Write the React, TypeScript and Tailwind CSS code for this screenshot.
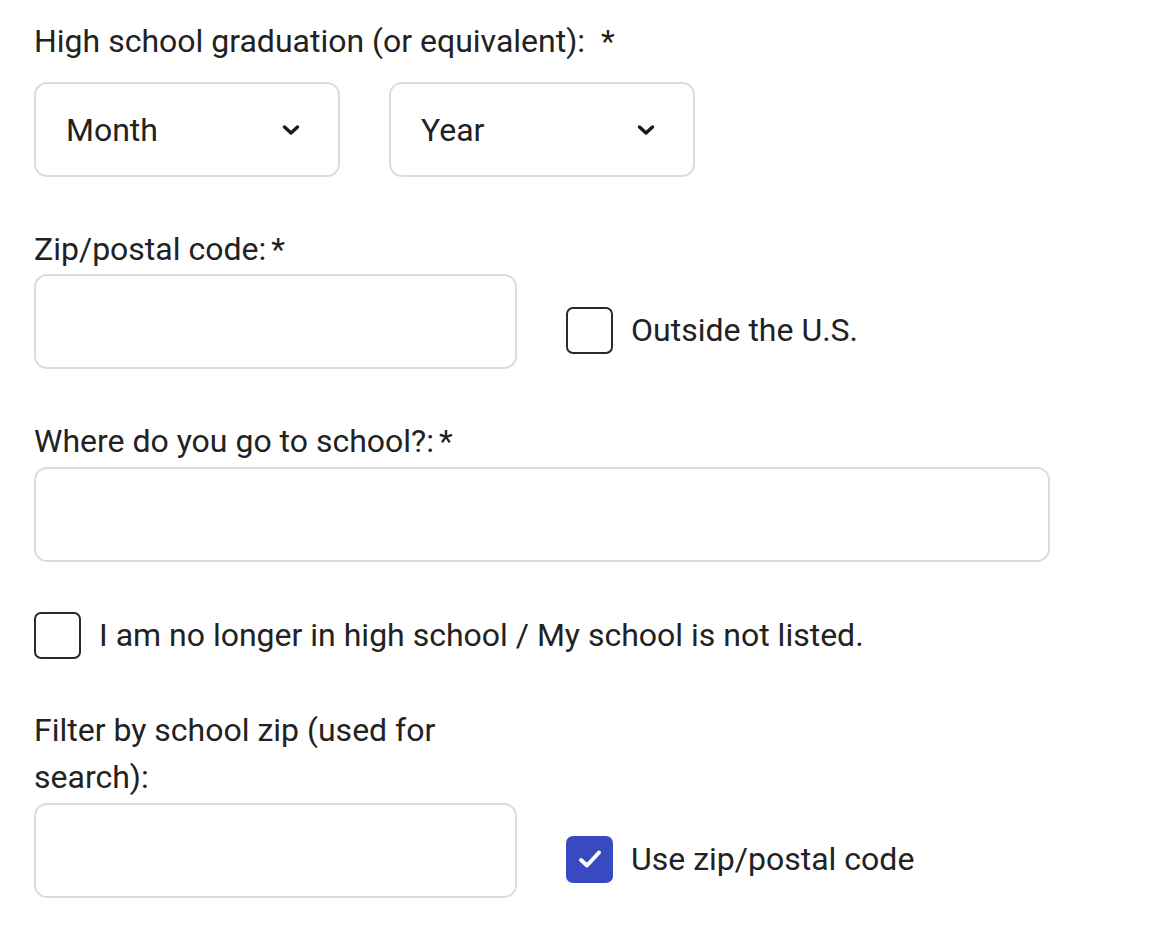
import React, { useState } from 'react';

const Chevron: React.FC = () => (
  <svg width="18" height="12" viewBox="0 0 18 12" fill="none" className="shrink-0">
    <path d="M2.5 3 L9 9 L15.5 3" stroke="#1a1a1a" strokeWidth="3.4" strokeLinecap="round" strokeLinejoin="round" />
  </svg>
);

const Select: React.FC<{ placeholder: string }> = ({ placeholder }) => (
  <div className="w-[306px] h-[95px] border-2 border-[#dcdcdc] rounded-[13px] flex items-center justify-between pl-[30px] pr-[38px] bg-white">
    <span className="text-[32px] text-[#222] leading-none">{placeholder}</span>
    <Chevron />
  </div>
);

const Checkbox: React.FC<{ checked?: boolean; onToggle: () => void }> = ({ checked, onToggle }) => (
  <button
    type="button"
    onClick={onToggle}
    className={
      checked
        ? 'w-[47px] h-[47px] rounded-[7px] bg-[#3949bf] flex items-center justify-center shrink-0'
        : 'w-[47px] h-[47px] rounded-[7px] border-2 border-[#2a2a2a] bg-white shrink-0'
    }
  >
    {checked && (
      <svg width="26" height="22" viewBox="0 0 26 22" fill="none">
        <path d="M4 12 L10 17.5 L22 4.5" stroke="white" strokeWidth="4" strokeLinecap="round" strokeLinejoin="round" />
      </svg>
    )}
  </button>
);

const App: React.FC = () => {
  const [outside, setOutside] = useState(false);
  const [notListed, setNotListed] = useState(false);
  const [useZip, setUseZip] = useState(true);

  return (
    <div
      className="min-h-[932px] bg-white pl-[34px] pt-[17px] text-[#222] text-[32px] leading-[48px]"
      style={{ fontFamily: 'Roboto, "Liberation Sans", sans-serif' }}
    >
      {/* Graduation */}
      <div className="mb-[17px]">High school graduation (or equivalent):&nbsp; *</div>
      <div className="flex gap-[49px]">
        <Select placeholder="Month" />
        <Select placeholder="Year" />
      </div>

      {/* Zip */}
      <div className="mt-[48px]">Zip/postal code:<span className="ml-[5px]">*</span></div>
      <div className="flex items-start mt-px">
        <input className="w-[483px] h-[95px] border-2 border-[#dcdcdc] rounded-[13px] outline-none px-4" />
        <label className="flex items-center gap-[18px] ml-[49px] mt-[32px]">
          <Checkbox checked={outside} onToggle={() => setOutside(v => !v)} />
          <span>Outside the U.S.</span>
        </label>
      </div>

      {/* School */}
      <div className="mt-[48px]">Where do you go to school?:<span className="ml-[5px]">*</span></div>
      <input className="w-[1016px] h-[95px] border-2 border-[#dcdcdc] rounded-[13px] outline-none px-4 mt-[2px] block" />

      <label className="flex items-center gap-[18px] mt-[49px]">
        <Checkbox checked={notListed} onToggle={() => setNotListed(v => !v)} />
        <span>I am no longer in high school / My school is not listed.</span>
      </label>

      {/* Filter */}
      <div className="mt-[48px] w-[483px] leading-[47px]">Filter by school zip (used for search):</div>
      <div className="flex items-start mt-[2px]">
        <input className="w-[483px] h-[95px] border-2 border-[#dcdcdc] rounded-[13px] outline-none px-4" />
        <label className="flex items-center gap-[18px] ml-[49px] mt-[32px]">
          <Checkbox checked={useZip} onToggle={() => setUseZip(v => !v)} />
          <span>Use zip/postal code</span>
        </label>
      </div>
    </div>
  );
};

export default App;
